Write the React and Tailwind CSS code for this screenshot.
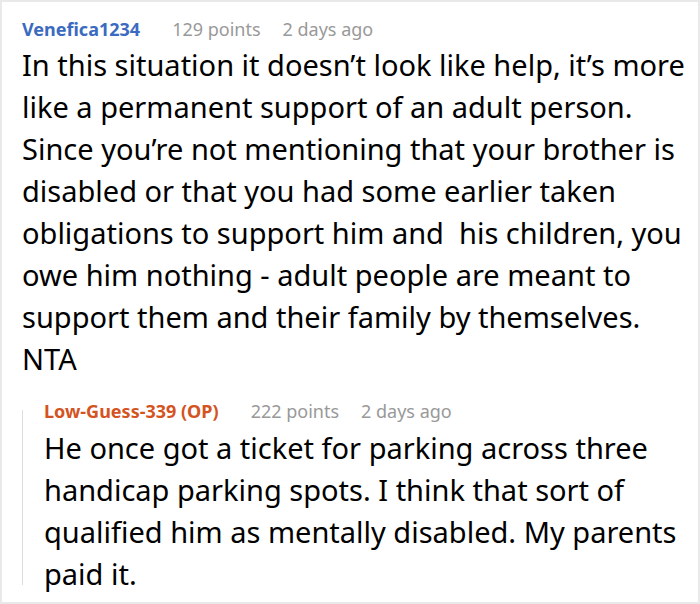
function CommentMeta({ author, authorColor, points, time }) {
  return (
    <div className="flex items-baseline text-[18px] leading-6">
      <span className={`font-bold ${authorColor}`}>{author}</span>
      <span className="ml-8 text-[#999999]">{points}</span>
      <span className="ml-[22px] text-[#999999]">{time}</span>
    </div>
  );
}

function App() {
  return (
    <div
      className="w-[700px] h-[604px] bg-white border-2 border-[#e9e9e9] pt-[15px] pl-5 pr-3 text-black overflow-hidden"
      style={{ fontFamily: '"Noto Sans", "Open Sans", sans-serif' }}
    >
      <CommentMeta
        author="Venefica1234"
        authorColor="text-[#3a6bc0]"
        points="129 points"
        time="2 days ago"
      />
      <p className="mt-[3px] text-[29px] leading-[42px]">
        In this situation it doesn’t look like help, it’s more like a permanent
        support of an adult person. Since you’re not mentioning that your
        brother is disabled or that you had some earlier taken obligations to
        support him and&nbsp; his children, you owe him nothing - adult people
        are meant to support them and their family by themselves. NTA
      </p>

      <div className="flex mt-[19px]">
        <div className="w-px bg-[#dedede] mt-[11px] mb-[10px] shrink-0" />
        <div className="pl-[21px]">
          <CommentMeta
            author="Low-Guess-339 (OP)"
            authorColor="text-[#d4531f]"
            points="222 points"
            time="2 days ago"
          />
          <p className="mt-[4px] text-[29px] leading-[42px]">
            He once got a ticket for parking across three handicap parking
            spots. I think that sort of qualified him as mentally disabled. My
            parents paid it.
          </p>
        </div>
      </div>
    </div>
  );
}

export default App;
